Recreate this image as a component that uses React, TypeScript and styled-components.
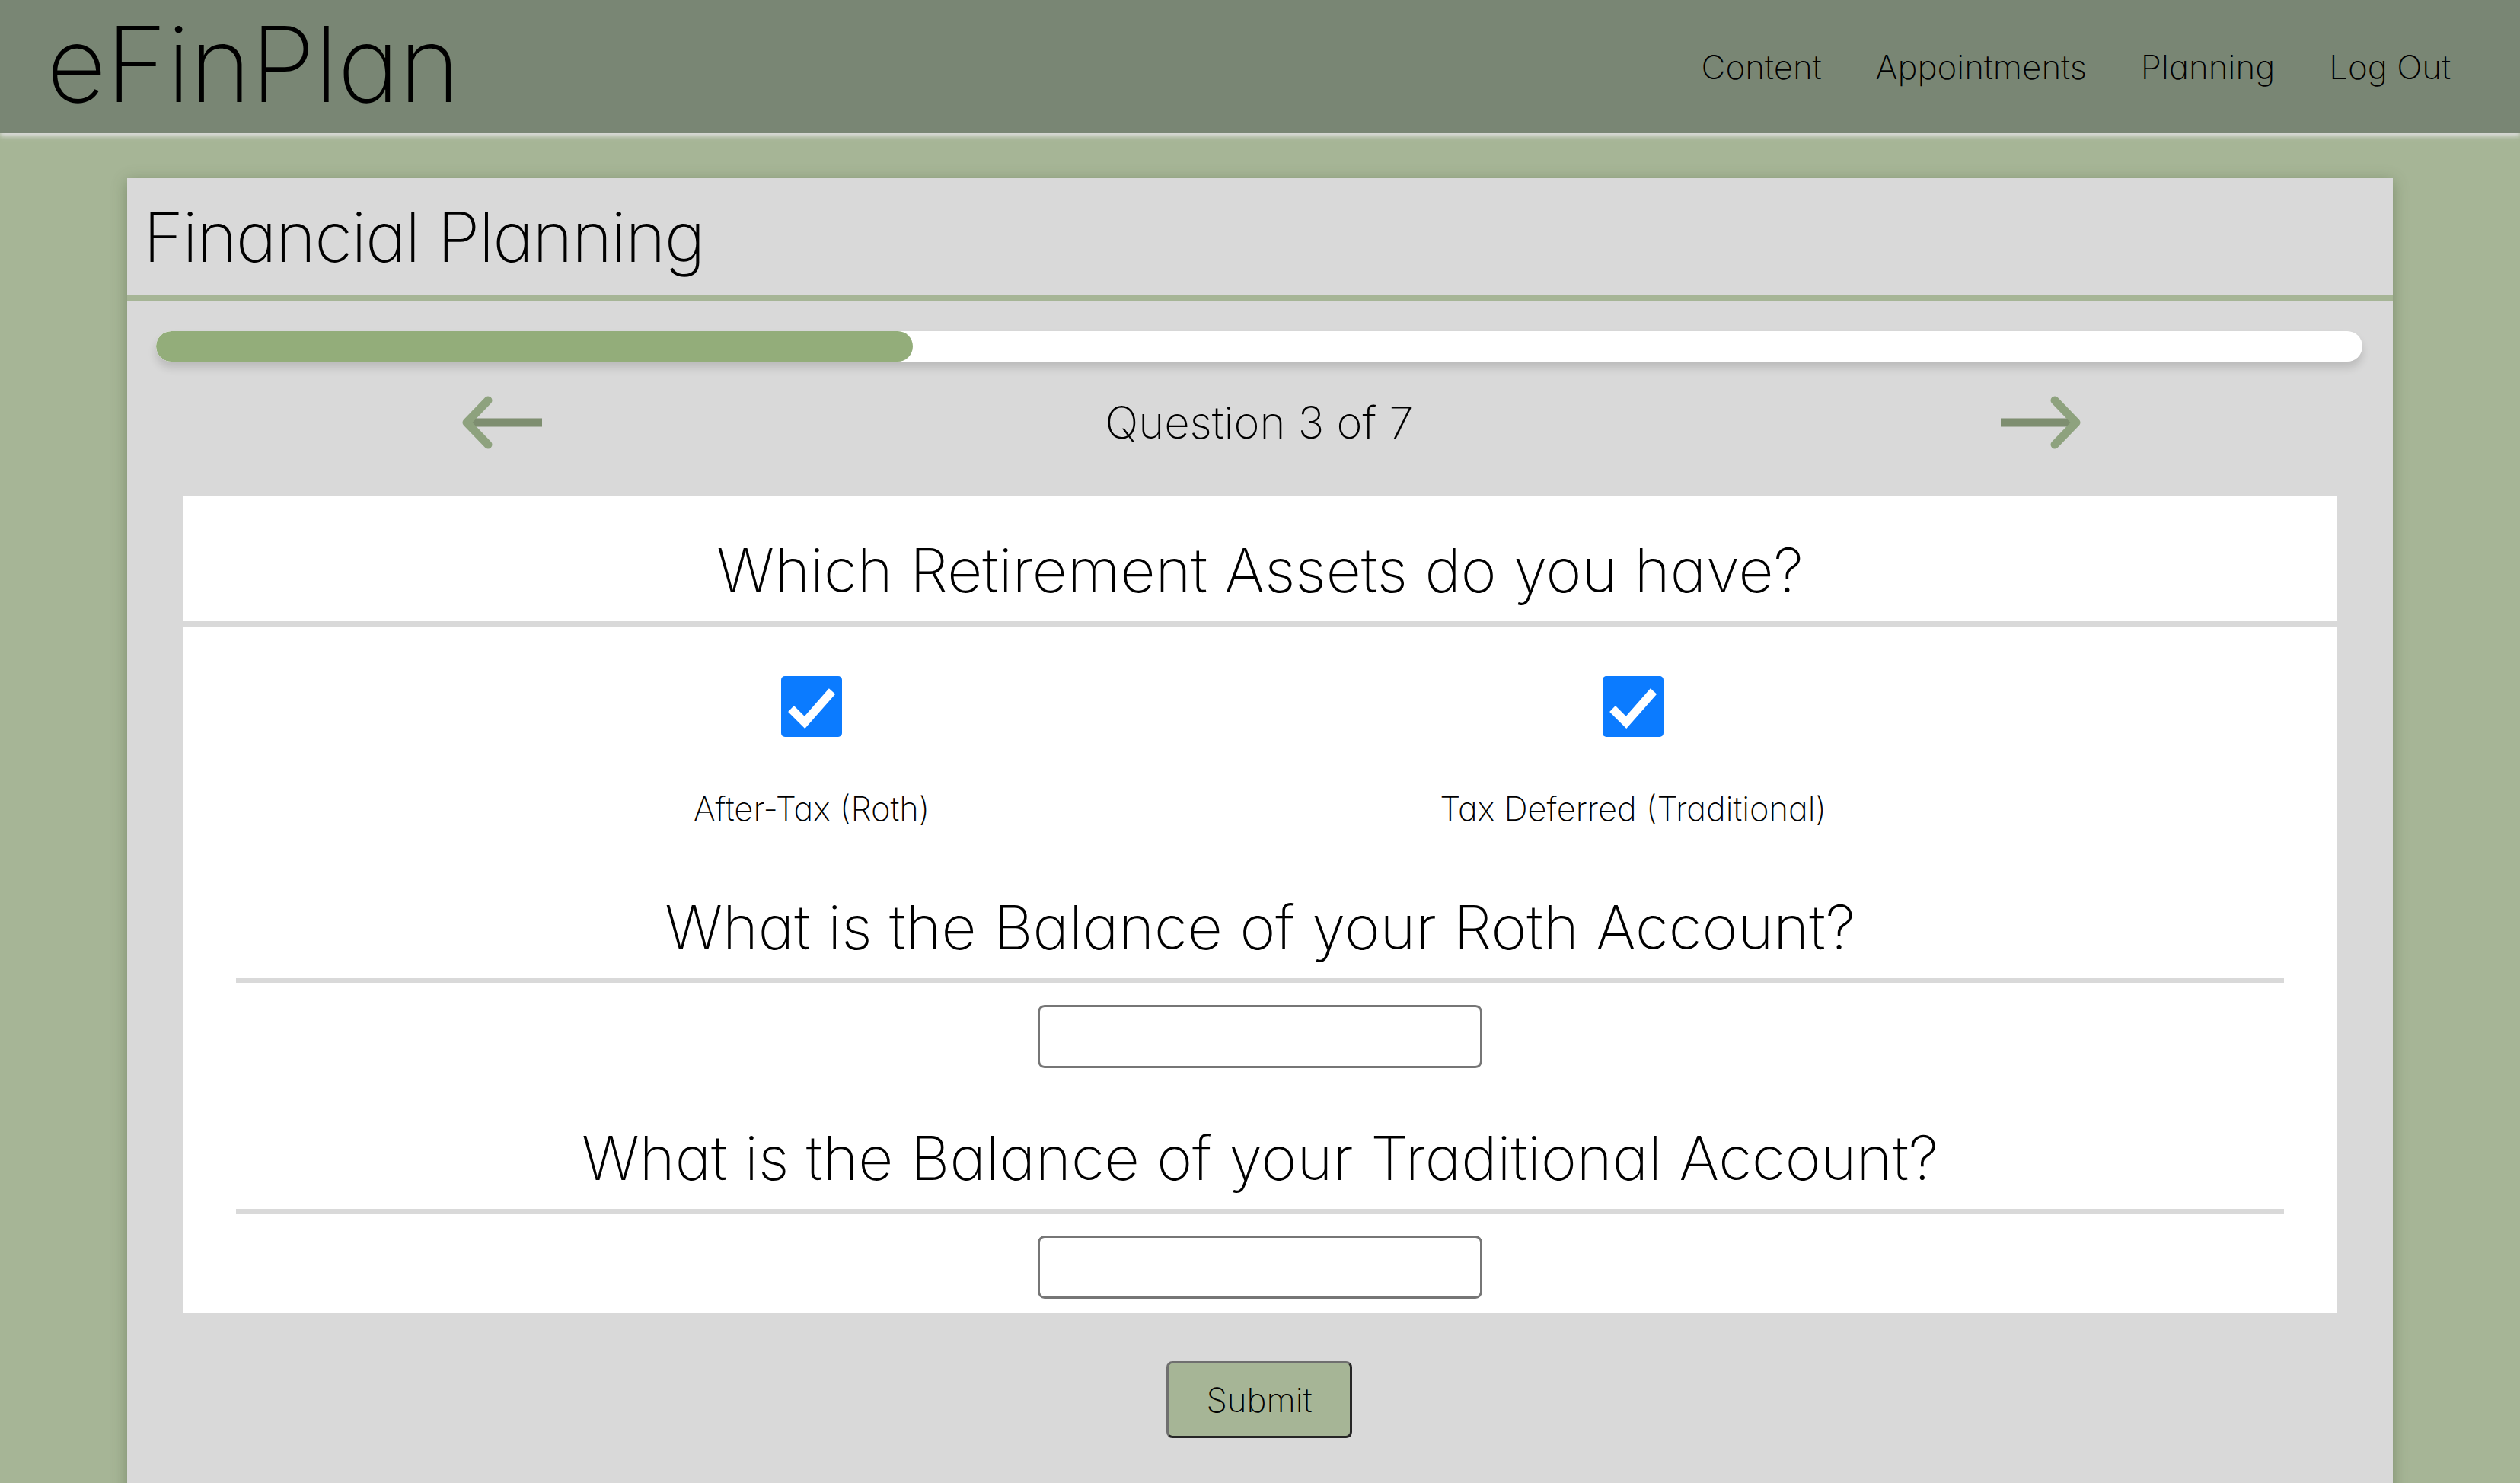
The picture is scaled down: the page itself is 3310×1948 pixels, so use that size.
import React from 'react';
import styled, { createGlobalStyle } from 'styled-components';

const GlobalStyle = createGlobalStyle`
  html, body {
    margin: 0;
    padding: 0;
  }
  body {
    background: #a6b596;
    font-family: Inter, "Noto Sans", "Liberation Sans", sans-serif;
    font-weight: 250;
    font-feature-settings: "cv11";
    color: #000;
  }
  * {
    box-sizing: border-box;
  }
`;

const Header = styled.header`
  position: relative;
  z-index: 2;
  height: 175px;
  background: #798674;
  display: flex;
  align-items: center;
  justify-content: space-between;
  padding: 0 91px 0 61px;
  box-shadow: 0 4px 6px rgba(222, 222, 222, 0.95);
`;

const Logo = styled.div`
  font-size: 137px;
  line-height: 1;
  letter-spacing: -0.5px;
  padding-bottom: 6px;
`;

const Nav = styled.nav`
  display: flex;
  align-items: center;
  gap: 71px;
`;

const NavLink = styled.a`
  font-size: 44px;
  color: #000;
  text-decoration: none;
  cursor: pointer;
`;

const Main = styled.main`
  padding-top: 59px;
`;

const Card = styled.section`
  width: 2976px;
  margin: 0 auto;
  background: #d9d9d9;
  padding-bottom: 120px;
  box-shadow: 0 4px 18px rgba(70, 90, 55, 0.45);
`;

const CardTitle = styled.h1`
  margin: 0;
  height: 162px;
  padding-left: 21px;
  display: flex;
  align-items: center;
  font-size: 91px;
  letter-spacing: -1.8px;
  font-weight: inherit;
  border-bottom: 8px solid #a6b596;
`;

const CardBody = styled.div`
  padding: 39px 40px 0 38px;
`;

const ProgressTrack = styled.div`
  height: 40px;
  border-radius: 20px;
  background: #fff;
  overflow: hidden;
  box-shadow: 0 8px 12px rgba(0, 0, 0, 0.14);
`;

const ProgressFill = styled.div`
  height: 100%;
  background: #93ad7a;
  border-radius: 20px;
`;

const StepRow = styled.div`
  height: 176px;
  padding-bottom: 16px;
  display: grid;
  grid-template-columns: 1fr auto 1fr;
  align-items: center;
`;

const ArrowButton = styled.button<{ $side: 'left' | 'right' }>`
  background: none;
  border: none;
  padding: 0;
  display: flex;
  cursor: pointer;
  justify-self: ${({ $side }) => ($side === 'left' ? 'start' : 'end')};
  margin: ${({ $side }) => ($side === 'left' ? '0 0 0 401px' : '0 369px 0 0')};
`;

const StepLabel = styled.div`
  font-size: 58px;
`;

const QuestionBox = styled.div`
  background: #fff;
  margin: 0 34px 0 36px;
  padding-bottom: 19px;
`;

const BoxHeading = styled.h2`
  margin: 0;
  height: 173px;
  padding-top: 30px;
  display: flex;
  align-items: center;
  justify-content: center;
  font-size: 80px;
  font-weight: inherit;
  border-bottom: 8px solid #d9d9d9;
`;

const OptionRow = styled.div`
  display: flex;
  justify-content: space-evenly;
  padding-top: 64px;
`;

const Option = styled.label`
  display: flex;
  flex-direction: column;
  align-items: center;
  gap: 70px;
  font-size: 43.5px;
  line-height: 48px;
  cursor: pointer;
`;

const CheckBox = styled.span`
  width: 80px;
  height: 80px;
  border-radius: 5px;
  background: #0b7bff;
  display: flex;
`;

const SubQuestion = styled.h3<{ $gap: number }>`
  margin: ${({ $gap }) => $gap}px 69px 0;
  padding-bottom: 20px;
  text-align: center;
  font-size: 80px;
  line-height: 94px;
  font-weight: inherit;
  border-bottom: 6px solid #d9d9d9;
`;

const AmountInput = styled.input`
  display: block;
  margin: 29px auto 0;
  width: 584px;
  height: 83px;
  border: 3px solid #767676;
  border-radius: 9px;
  background: #fff;
  font-family: inherit;
  font-size: 40px;
  padding: 0 14px;
`;

const SubmitRow = styled.div`
  display: flex;
  justify-content: center;
  padding-top: 63px;
`;

const SubmitButton = styled.button`
  width: 244px;
  height: 101px;
  background: #a6b596;
  border: 3px solid;
  border-color: #6f6f6f #262626 #262626 #6f6f6f;
  border-radius: 8px;
  font-family: inherit;
  font-weight: inherit;
  font-size: 44px;
  color: #000;
  cursor: pointer;
`;

function Arrow({ flip }: { flip?: boolean }) {
  return (
    <svg width="106" height="74" viewBox="0 0 106 74" style={flip ? { transform: 'scaleX(-1)' } : undefined}>
      <path d="M0 37 H98" stroke="#7e8e70" strokeWidth="11" fill="none" />
      <path d="M71 8 L99 37 L71 66" stroke="#8ea27e" strokeWidth="11" strokeLinecap="round" strokeLinejoin="round" fill="none" />
    </svg>
  );
}

function Check() {
  return (
    <svg width="80" height="80" viewBox="0 0 80 80">
      <path d="M13 43 L31 61 L67 20" stroke="#fff" strokeWidth="11" fill="none" strokeLinejoin="miter" />
    </svg>
  );
}

const options = ['After-Tax (Roth)', 'Tax Deferred (Traditional)'];

export default function App() {
  const step = 3;
  const total = 7;

  return (
    <>
      <GlobalStyle />
      <Header>
        <Logo>eFinPlan</Logo>
        <Nav>
          <NavLink>Content</NavLink>
          <NavLink>Appointments</NavLink>
          <NavLink>Planning</NavLink>
          <NavLink>Log Out</NavLink>
        </Nav>
      </Header>
      <Main>
        <Card>
          <CardTitle>Financial Planning</CardTitle>
          <CardBody>
            <ProgressTrack>
              <ProgressFill style={{ width: '34.3%' }} />
            </ProgressTrack>
            <StepRow>
              <ArrowButton $side="left" aria-label="Previous">
                <Arrow flip />
              </ArrowButton>
              <StepLabel>Question {step} of {total}</StepLabel>
              <ArrowButton $side="right" aria-label="Next">
                <Arrow />
              </ArrowButton>
            </StepRow>
            <QuestionBox>
              <BoxHeading>Which Retirement Assets do you have?</BoxHeading>
              <OptionRow>
                {options.map((o) => (
                  <Option key={o}>
                    <CheckBox>
                      <Check />
                    </CheckBox>
                    {o}
                  </Option>
                ))}
              </OptionRow>
              <SubQuestion $gap={85}>What is the Balance of your Roth Account?</SubQuestion>
              <AmountInput type="text" />
              <SubQuestion $gap={71}>What is the Balance of your Traditional Account?</SubQuestion>
              <AmountInput type="text" />
            </QuestionBox>
            <SubmitRow>
              <SubmitButton>Submit</SubmitButton>
            </SubmitRow>
          </CardBody>
        </Card>
      </Main>
    </>
  );
}
